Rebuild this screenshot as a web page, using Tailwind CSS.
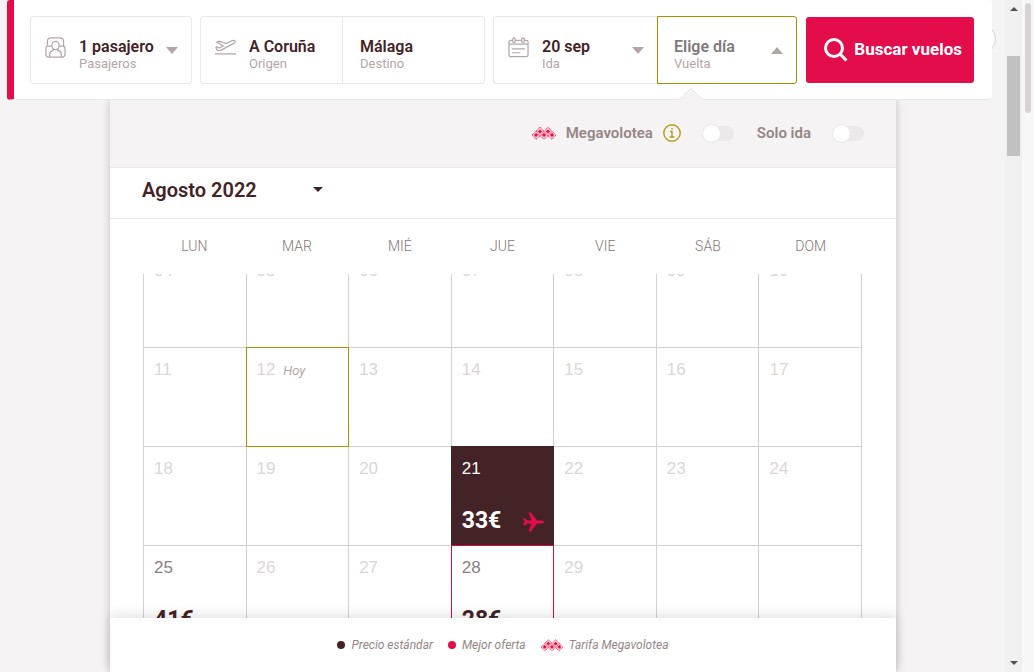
<!DOCTYPE html>
<html lang="es">
<head>
<meta charset="utf-8">
<title>Buscar vuelos</title>
<script src="https://cdn.jsdelivr.net/npm/@tailwindcss/browser@4"></script>
</head>
<body class="flex h-screen overflow-hidden bg-[#f5f3f4] font-['Roboto','Liberation_Sans',sans-serif] text-[#442326]">
<svg class="hidden" aria-hidden="true">
  <symbol id="mega" viewBox="0 0 24 13">
    <path d="M0 8 8 0l4 4 4-4 8 8-4 4.500-4-3.500-4 3.500L8 9l-4 3.500z" fill="#f9bccb"/>
    <path d="M0 8 8 0l4 4 4-4 8 8-4 4.500-4-3.500-4 3.500L8 9l-4 3.500zM4 4l4 5 4-5 4 5 4-5" fill="none" stroke="#e5305c" stroke-width="1" stroke-dasharray="1 1"/>
    <path d="M8 2.500 10 4.500 8 6.500 6 4.500zM16 2.500l2 2-2 2-2-2zM4 6l2 2-2 2-2-2zM12 6l2 2-2 2-2-2zM20 6l2 2-2 2-2-2z" fill="#e20d4a"/>
  </symbol>
</svg>
<div class="relative flex min-w-0 flex-1 flex-col">
  <div class="absolute top-[24px] right-[9px] size-[30px] rounded-full border border-[#d5cfd0] bg-white"></div>
  <form class="relative z-20 mr-[13px] ml-[7px] flex h-[100px] shrink-0 rounded-l-[3px] rounded-r-[3px] border-b border-l-[7px] border-b-[#e9e8e8] border-l-[#e20d4a] bg-white pt-4 pr-[18px] pb-[15px] pl-4">
    <button type="button" class="flex h-[68px] w-[162px] items-center rounded-[3px] border border-[#e9e8e8] pl-[14px] text-left">
      <svg class="-mt-[6px] size-[21px]" viewBox="0 0 22 22" fill="none" stroke="#b3a6a7" stroke-width="1.300"><path d="M2.500 9V4.500Q2.800 1 6 1h10q3.200 0 3.500 3.500V9M7 9.500H3.500Q1 9.500 1 12v6q0 3 3 3h14q3 0 3-3v-6q0-2.500-2.500-2.500H15"/><ellipse cx="11" cy="9" rx="3.800" ry="4.300"/><path d="M8.500 12.500v1.500Q5 15 5 17.500V21M13.500 12.500v1.500Q17 15 17 17.500V21"/></svg>
      <span class="mt-[7px] ml-[13px] flex-1"><b class="block text-[16px] leading-5 font-semibold">1 pasajero</b><span class="block text-[13px] leading-[14px] text-[#b3a6a7]">Pasajeros</span></span>
      <svg class="mr-[13px] h-[7px] w-3" viewBox="0 0 12 7"><path d="M0 0h12L6 7z" fill="#b3a6a7"/></svg>
    </button>
    <div class="ml-2 flex h-[68px] w-[143px] items-center rounded-l-[3px] border border-[#e9e8e8] pl-[14px]">
      <svg class="-mt-[6px] h-4 w-[21px] shrink-0" viewBox="0 0 22 16" fill="none" stroke="#b3a6a7" stroke-width="1.300"><path d="M0 15.200h22M1 8.500l1-.8 2.500 1.300L8.500 7 2 2.800l2-1L12 4.500l5.500-3q2.500-1 3.500.2.500 1.300-1.500 2.500L7 11q-2 1-4 .5Q1.500 11 1 8.500z"/></svg>
      <div class="mt-[7px] ml-[13px] flex min-w-0 flex-col"><input id="origin" value="A Coruña" class="h-5 w-full text-[16px] font-semibold outline-none"><label for="origin" class="text-[13px] leading-[14px] text-[#b3a6a7]">Origen</label></div>
    </div>
    <div class="-ml-px flex h-[68px] w-[143px] items-center rounded-r-[3px] border border-[#e9e8e8] pl-[17px]">
      <div class="mt-[7px] flex min-w-0 flex-col"><input id="destination" value="Málaga" class="h-5 w-full text-[16px] font-semibold outline-none"><label for="destination" class="text-[13px] leading-[14px] text-[#b3a6a7]">Destino</label></div>
    </div>
    <button type="button" class="ml-2 flex h-[68px] w-[165px] items-center rounded-l-[3px] border border-[#e9e8e8] pl-[14px] text-left">
      <svg class="-mt-[6px] size-[21px]" viewBox="0 0 22 22" fill="none" stroke="#b3a6a7" stroke-width="1.300"><path d="M5 3.500H3Q1 3.500 1 5.500V18.500q0 2 2 2h16q2 0 2-2V5.500q0-2-2-2h-2M7.500 3.500h7M1 7.500h20M4 12.500h14M4 16.500h9"/><rect x="5" y="1" width="2.500" height="5" rx="1.200"/><rect x="14.500" y="1" width="2.500" height="5" rx="1.200"/></svg>
      <span class="mt-[7px] ml-[13px] flex-1"><b class="block text-[16px] leading-5 font-semibold">20 sep</b><span class="block text-[13px] leading-[14px] text-[#b3a6a7]">Ida</span></span>
      <svg class="mr-[13px] h-[7px] w-3" viewBox="0 0 12 7"><path d="M0 0h12L6 7z" fill="#b3a6a7"/></svg>
    </button>
    <button type="button" class="-ml-px flex h-[68px] w-[140px] items-center rounded-r-[3px] border border-[#ab9000] pl-4 text-left">
      <span class="mt-[7px] flex-1"><b class="block text-[16px] leading-5 font-semibold text-[#7e7a7a]">Elige día</b><span class="block text-[13px] leading-[14px] text-[#b3a6a7]">Vuelta</span></span>
      <svg class="mr-[13px] h-[7px] w-3" viewBox="0 0 12 7"><path d="M0 7h12L6 0z" fill="#b3a6a7"/></svg>
    </button>
    <button type="submit" class="mt-px ml-[9px] flex h-[66px] flex-1 items-center justify-end gap-[6px] rounded-[3px] bg-[#e20d4a] pr-3 text-[17px] font-bold whitespace-nowrap text-white">
      <svg class="size-6" viewBox="0 0 24 24" fill="none" stroke="#fff" stroke-width="3"><circle cx="10" cy="10" r="8.500"/><path d="m16 16 6.500 6.500"/></svg>Buscar vuelos
    </button>
    <svg class="absolute -bottom-px left-[665px] h-3 w-6" viewBox="0 0 24 12"><path d="M0 12 12 .5 24 12z" fill="#f5f3f4"/><path d="M0 11.500 12 .5l12 11" fill="none" stroke="#e9e8e8"/></svg>
  </form>

  <main class="mr-[109px] ml-[110px] flex min-h-0 flex-1 flex-col bg-white shadow-[0_0_8px_rgba(68,35,38,0.25)]">
    <div class="flex h-[68px] shrink-0 items-center justify-end border-b border-[#e9e8e8] bg-[#f5f3f4] pr-8 pb-px text-[15px] font-semibold text-[#958685]">
      <svg class="h-[13px] w-6"><use href="#mega"/></svg>
      <label for="megaToggle" class="ml-[10px]">Megavolotea</label>
      <button type="button" aria-label="Información" class="ml-[10px]"><svg class="size-[18px]" viewBox="0 0 18 18" fill="none" stroke="#b39c1b" stroke-width="1.400"><circle cx="9" cy="9" r="8.200"/><path d="M7 7.500h2V13M6.500 13h5M8.300 4.700h1.400"/></svg></button>
      <input id="megaToggle" type="checkbox" class="relative ml-[23px] h-[15px] w-[30px] appearance-none rounded-full bg-[#ebe9e9] before:absolute before:-top-[2px] before:-left-[2px] before:size-[19px] before:rounded-full before:border before:border-[#e9e7e7] before:bg-white">
      <label for="oneWay" class="ml-[23px]">Solo ida</label>
      <input id="oneWay" type="checkbox" class="relative ml-[23px] h-[15px] w-[30px] appearance-none rounded-full bg-[#ebe9e9] before:absolute before:-top-[2px] before:-left-[2px] before:size-[19px] before:rounded-full before:border before:border-[#e9e7e7] before:bg-white">
    </div>
    <div class="h-[51px] shrink-0 border-b border-[#e9e8e8] pt-[7px] pl-8">
      <div class="relative w-[181px]">
        <select aria-label="Mes" class="h-[30px] w-full appearance-none text-[20px] font-semibold outline-none"><option>Agosto 2022</option></select>
        <svg class="pointer-events-none absolute top-[12px] right-0 h-[5px] w-[10px]" viewBox="0 0 10 5"><path d="M0 0h10L5 5z" fill="#442326"/></svg>
      </div>
    </div>
    <table class="mr-[34px] ml-[33px] flex min-h-0 flex-1 flex-col">
      <thead class="block shrink-0">
        <tr class="grid h-[55px] grid-cols-7 items-center text-[14px] text-[#857675]"><th class="font-light">LUN</th><th class="font-light">MAR</th><th class="font-light">MIÉ</th><th class="font-light">JUE</th><th class="font-light">VIE</th><th class="font-light">SÁB</th><th class="font-light">DOM</th></tr>
      </thead>
      <tbody class="block min-h-0 flex-1 overflow-hidden border-l border-[#d5d1d2] font-['Liberation_Sans',sans-serif] text-[17px] text-[#dbd6d6] [&_td]:border-r [&_td]:border-b [&_td]:border-[#d5d1d2] [&_td]:px-[10px] [&_td]:pt-[10px] [&_td]:leading-6 [&_tr]:grid [&_tr]:h-[99px] [&_tr]:grid-cols-7">
        <tr class="-mt-[25px]"><td>04</td><td>05</td><td>06</td><td>07</td><td>08</td><td>09</td><td>10</td></tr>
        <tr><td>11</td><td class="relative z-10 -mt-px -ml-px border-t border-l border-[#ab9000]!">12 <i class="ml-[3px] font-['Roboto','Liberation_Sans',sans-serif] text-[13px] text-[#b3a6a7]">Hoy</i></td><td>13</td><td>14</td><td>15</td><td>16</td><td>17</td></tr>
        <tr><td>18</td><td>19</td><td>20</td><td class="relative z-10 -mt-px -ml-px border-t border-l border-[#442326]! bg-[#442326] text-white">21<div class="mt-7 flex items-center justify-between font-['Roboto',sans-serif] text-[23px] font-bold">33€<svg class="mt-[2px] -mr-px h-5 w-[21px]" viewBox="0 0 21 20" fill="#e20d4a"><path d="M0 6.500h2L4.500 8.500H8.500L5.500.5h2.500L14 8.500h5q2 .3 2 1.500t-2 1.500h-5L8 19.500H5.500l3-8H4.500L2 13.500H0L1.500 10z"/></svg></div></td><td>22</td><td>23</td><td>24</td></tr>
        <tr><td class="text-[#8d7f80]">25<div class="mt-7 font-['Roboto',sans-serif] text-[23px] font-bold text-[#442326]">41€</div></td><td>26</td><td>27</td><td class="relative z-10 -mt-px -ml-px border-t border-l border-[#d01048]! text-[#8d7f80]">28<div class="mt-7 font-['Roboto',sans-serif] text-[23px] font-bold text-[#442326]">28€</div></td><td>29</td><td></td><td></td></tr>
      </tbody>
    </table>
    <footer class="relative z-10 flex h-[54px] shrink-0 items-center justify-center bg-white text-[12px] text-[#958685] italic shadow-[0_-3px_12px_rgba(0,0,0,0.12)]">
      <span class="mr-[6px] size-2 rounded-full bg-[#442326]"></span>Precio estándar
      <span class="mr-[6px] ml-[15px] size-2 rounded-full bg-[#e20d4a]"></span>Mejor oferta
      <svg class="mr-[6px] ml-[15px] h-[13px] w-[22px]"><use href="#mega"/></svg>Tarifa Megavolotea
    </footer>
  </main>
</div>
<div class="flex w-[17px] shrink-0 flex-col items-center justify-between bg-[#f1f0f1] py-[7px]" aria-hidden="true">
  <svg class="h-1 w-2" viewBox="0 0 8 4"><path d="M0 4h8L4 0z" fill="#505050"/></svg>
  <div class="mt-[45px] mb-auto h-[100px] w-[13px] bg-[#c1c1c1]"></div>
  <svg class="h-1 w-2" viewBox="0 0 8 4"><path d="M0 0h8L4 4z" fill="#505050"/></svg>
</div>
<div class="w-3 shrink-0 bg-[#f8f7f8] pt-[3px] pl-[3px]" aria-hidden="true"><div class="h-[110px] w-[6px] rounded-full bg-[#d8d2d3]"></div></div>
</body>
</html>
